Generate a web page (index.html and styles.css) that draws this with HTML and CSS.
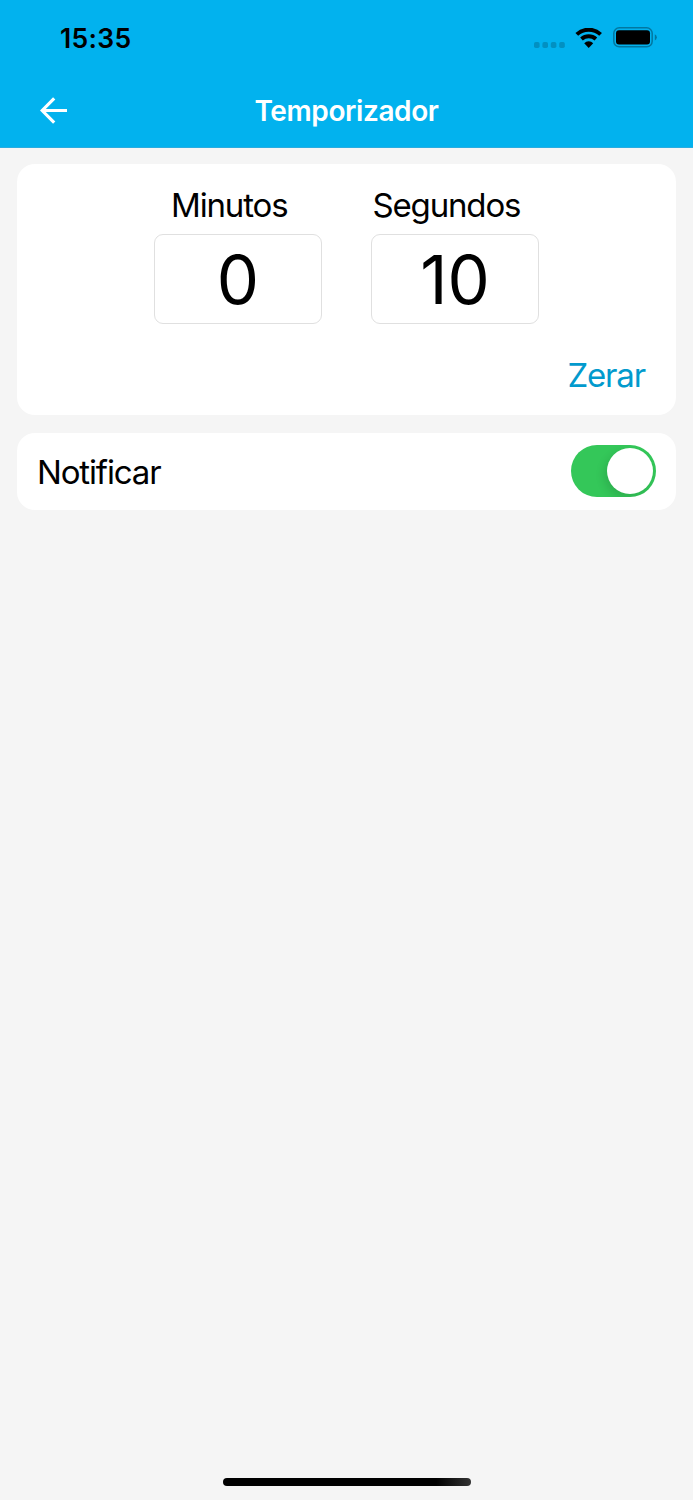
FILE: index.html
```
<!DOCTYPE html>
<html lang="pt-BR">
  <head>
    <meta charset="UTF-8" />
    <meta name="viewport" content="width=device-width, initial-scale=1.0" />
    <title>Temporizador</title>
    <link rel="stylesheet" href="styles.css" />
  </head>
  <body>
    <header class="header">
      <div class="status">
        <span class="time">15:35</span>
        <div class="status-icons">
          <svg class="signal" width="32" height="6" viewBox="0 0 32 6">
            <rect x="0" y="0" width="5.6" height="6" rx="1.8" />
            <rect x="8.4" y="0" width="5.6" height="6" rx="1.8" />
            <rect x="16.8" y="0" width="5.6" height="6" rx="1.8" />
            <rect x="25.2" y="0" width="5.6" height="6" rx="1.8" />
          </svg>
          <svg class="wifi" width="28" height="20" viewBox="0 0 28 20">
            <path d="M1.8 6.4A17.4 17.4 0 0 1 25.6 6.4M6.5 11A11 11 0 0 1 20.9 11" />
            <path class="dot" d="M13.7 19.9L9.2 15.2A6.3 6.3 0 0 1 18.2 15.2Z" />
          </svg>
          <svg class="battery" width="45" height="21" viewBox="0 0 45 21">
            <rect class="shell" x="0.8" y="0.8" width="38.4" height="19" rx="5.5" />
            <rect x="3" y="3.2" width="34" height="14.2" rx="3" />
            <path class="tip" d="M41.8 7.2Q43.8 8 43.8 10.3T41.8 13.4Z" />
          </svg>
        </div>
      </div>
      <nav class="nav">
        <a class="back" href="#" aria-label="Voltar">
          <svg width="28" height="28" viewBox="0 0 28 28">
            <path d="M27 13.5H2.5M14.2 1.3L2.2 13.5L14.2 25.7" />
          </svg>
        </a>
        <h1>Temporizador</h1>
      </nav>
    </header>
    <main>
      <section class="card timer">
        <div class="labels">
          <label for="min">Minutos</label>
          <label for="seg">Segundos</label>
        </div>
        <div class="fields">
          <input id="min" type="text" value="0" />
          <input id="seg" type="text" value="10" />
        </div>
        <button class="reset" type="button">Zerar</button>
      </section>
      <section class="card notify">
        <span class="notify-text">Notificar</span>
        <div class="switch" role="switch" aria-checked="true">
          <div class="knob"></div>
        </div>
      </section>
    </main>
    <footer>
      <div class="home"></div>
    </footer>
  </body>
</html>
```
FILE: styles.css
```
* {
  margin: 0;
  padding: 0;
  box-sizing: border-box;
}
body {
  display: flex;
  flex-direction: column;
  height: 1500px;
  background: #f5f5f5;
  color: #000;
  font-family: Inter, "Liberation Sans", sans-serif;
  font-size: 33px;
  letter-spacing: -1.15px;
}
.header {
  height: 148px;
  background: #02b2ee;
  border-bottom: 1px solid #2aace0;
}
.status {
  display: flex;
  justify-content: space-between;
  height: 74px;
  padding: 0 35px 0 60px;
}
.time {
  padding-top: 22px;
  font-size: 26.5px;
  font-weight: 600;
  line-height: 32px;
  letter-spacing: 0.3px;
}
.status-icons {
  display: flex;
  align-items: flex-start;
}
.signal {
  margin: 42px 9px 0 0;
  fill: #0290c1;
}
.wifi {
  margin: 28px 10px 0 0;
  fill: none;
  stroke: #000;
  stroke-width: 4;
}
.wifi .dot {
  fill: #000;
  stroke: none;
}
.battery {
  margin-top: 27px;
}
.battery .shell {
  fill: none;
  stroke: #0277a0;
  stroke-width: 1.5;
}
.battery .tip {
  fill: #0277a0;
}
.nav {
  display: grid;
  grid-template-columns: 80px 1fr 80px;
  align-items: center;
  height: 73px;
}
.back {
  height: 28px;
  padding-left: 40px;
}
.back svg {
  display: block;
  fill: none;
  stroke: #fff;
  stroke-width: 3.2;
}
.nav h1 {
  color: #fff;
  font-size: 28px;
  font-weight: 600;
  letter-spacing: -0.4px;
  text-align: center;
}
main {
  flex: 1;
  padding: 16px 17px;
}
.card {
  background: #fff;
  border-radius: 18px;
}
.timer {
  height: 251px;
  padding-top: 20px;
}
.labels {
  display: flex;
  gap: 85px;
  padding-left: 154px;
  line-height: 42px;
}
.fields {
  display: flex;
  justify-content: center;
  gap: 49px;
  margin-top: 8px;
}
.fields input {
  width: 168px;
  height: 90px;
  padding-top: 1px;
  border: 1px solid #e0e0e0;
  border-radius: 9px;
  background: #fff;
  color: #000;
  font-family: inherit;
  font-size: 67px;
  letter-spacing: 0;
  text-align: center;
}
.reset {
  display: block;
  margin: 30px 31px 0 auto;
  border: none;
  background: none;
  color: #029acd;
  font-family: inherit;
  font-size: 33px;
  letter-spacing: -1.15px;
  line-height: 42px;
}
.notify {
  display: flex;
  justify-content: space-between;
  align-items: center;
  height: 77px;
  margin-top: 18px;
  padding: 0 20px;
}
.switch {
  display: flex;
  justify-content: flex-end;
  width: 85px;
  height: 52px;
  padding: 3px;
  margin-bottom: 2px;
  border-radius: 26px;
  background: #34c759;
  overflow: hidden;
}
.knob {
  width: 46px;
  height: 46px;
  border-radius: 50%;
  background: #fff;
  box-shadow: -3px 4px 10px rgba(0, 0, 0, 0.12);
}
footer {
  display: flex;
  justify-content: center;
  padding-bottom: 14px;
}
.home {
  width: 248px;
  height: 8px;
  border-radius: 4px;
  background: linear-gradient(to right, #000 86%, #333);
}
```
